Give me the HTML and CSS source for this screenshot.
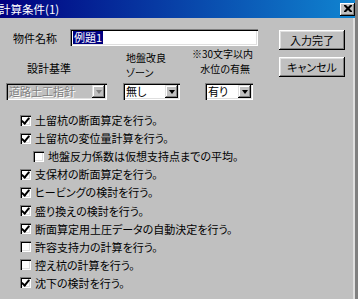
FILE: index.html
```html
<!DOCTYPE html>
<html lang="ja">
<head>
<meta charset="utf-8">
<title>計算条件(1)</title>
<link rel="stylesheet" href="styles.css">
</head>
<body>
<div class="window">
  <div class="titlebar">
    <span class="title">計算条件(1)</span>
    <span class="close"><svg width="8" height="7" viewBox="0 0 8 7"><path d="M0 0h2l2 2 2-2h2v1l-2.5 2.5L8 6v1H6L4 5 2 7H0V6l2.5-2.5L0 1z" fill="#000"/></svg></span>
  </div>
  <div class="client">
    <div class="top">
      <div class="form">
        <div class="name-row">
          <span class="name-label">物件名称</span>
          <div class="field"><span class="sel">例題1</span></div>
        </div>
        <div class="combos">
          <div class="lab lab1">設計基準</div>
          <div class="lab lab2">地盤改良<br>ゾーン</div>
          <div class="lab lab3"><span class="note">※30文字以内</span><span class="water">水位の有無</span></div>
          <div class="combo combo1 disabled"><span class="ctext">道路土工指針</span><span class="arrow"><i></i></span></div>
          <div class="combo combo2"><span class="ctext">無し</span><span class="arrow"><i></i></span></div>
          <div class="combo combo3"><span class="ctext">有り</span><span class="arrow"><i></i></span></div>
        </div>
      </div>
      <div class="buttons">
        <div class="btn">入力完了</div>
        <div class="btn">キャンセル</div>
      </div>
    </div>
    <ul class="checks">
      <li class="row"><span class="cb on"></span>土留杭の断面算定を行う。</li>
      <li class="row"><span class="cb on"></span>土留杭の変位量計算を行う。</li>
      <li class="row sub"><span class="cb"></span>地盤反力係数は仮想支持点までの平均。</li>
      <li class="row"><span class="cb on"></span>支保材の断面算定を行う。</li>
      <li class="row"><span class="cb on"></span>ヒービングの検討を行う。</li>
      <li class="row"><span class="cb on"></span>盛り換えの検討を行う。</li>
      <li class="row"><span class="cb on"></span>断面算定用土圧データの自動決定を行う。</li>
      <li class="row"><span class="cb"></span>許容支持力の計算を行う。</li>
      <li class="row"><span class="cb"></span>控え杭の計算を行う。</li>
      <li class="row"><span class="cb on"></span>沈下の検討を行う。</li>
    </ul>
  </div>
</div>
</body>
</html>
```

FILE: styles.css
```css
* { box-sizing: border-box; }
html, body { margin: 0; padding: 0; background: #c0c0c0; }
body {
  font-family: "Noto Sans CJK JP", "Noto Sans", sans-serif;
  font-size: 11px;
  font-feature-settings: "palt" 1;
  color: #000;
  width: 358px;
  height: 299px;
  overflow: hidden;
}
.window {
  width: 358px;
  height: 299px;
  background: #c0c0c0;
  display: flex;
  flex-direction: column;
  border-right: 3px solid #808080;
  box-shadow: inset -2px 0 0 #dfdfdf;
}
.titlebar {
  height: 18px;
  flex: none;
  background: linear-gradient(to right, #000080, #1084d0);
  display: flex;
  align-items: center;
  justify-content: space-between;
}
.title {
  color: #fff;
  font-size: 11.5px;
  line-height: 18px;
  margin-left: -1px;
}
.close {
  width: 15px;
  height: 13px;
  background: #c0c0c0;
  box-shadow: inset -1px -1px 0 #000, inset 1px 1px 0 #fff, inset -2px -2px 0 #808080;
  display: flex;
  align-items: center;
  justify-content: center;
  padding-bottom: 1px;
}
.client { flex: 1; display: flex; flex-direction: column; }
.top { display: flex; }
.form { width: 262px; }
.name-row {
  display: flex;
  align-items: center;
  margin-top: 11px;
  height: 17px;
}
.name-label { width: 70px; padding-left: 13px; }
.field {
  width: 188px;
  height: 17px;
  background: #fff;
  box-shadow: inset 1px 1px 0 #808080, inset 2px 2px 0 #000, inset -1px -1px 0 #fff, inset -2px -2px 0 #dfdfdf;
  padding: 2px 0 0 3px;
  line-height: 13px;
}
.sel { background: #000080; color: #fff; padding: 0 1px; display: inline-block; height: 13px; }
.combos {
  display: grid;
  grid-template-columns: 117px 82px 48px;
  grid-template-rows: 36px 17px;
  margin-top: 1px;
  padding-left: 6px;
}
.lab { align-self: start; white-space: nowrap; }
.lab1 { margin-top: 14px; padding-left: 21px; line-height: 14px; }
.lab2 { margin-top: 4px; padding-left: 3px; font-size: 10px; line-height: 14.5px; }
.lab3 { margin-left: -9px; display: flex; flex-direction: column; align-items: flex-end; font-size: 10px; line-height: 14.5px; }
.water { padding-right: 3px; }
.combo {
  height: 17px;
  background: #fff;
  box-shadow: inset 1px 1px 0 #808080, inset 2px 2px 0 #000, inset -1px -1px 0 #fff, inset -2px -2px 0 #dfdfdf;
  display: flex;
  align-items: center;
  padding: 2px 2px 2px 3px;
}
.combo1 { width: 101px; }
.combo2 { width: 57px; }
.combo3 { width: 48px; }
.ctext { flex: 1; line-height: 13px; }
.arrow {
  width: 13px;
  height: 13px;
  background: #c0c0c0;
  box-shadow: inset -1px -1px 0 #000, inset 1px 1px 0 #dfdfdf, inset -2px -2px 0 #808080, inset 2px 2px 0 #fff;
  display: flex;
  align-items: center;
  justify-content: center;
}
.arrow i {
  width: 0; height: 0;
  border-left: 3.5px solid transparent;
  border-right: 3.5px solid transparent;
  border-top: 4px solid #000;
}
.disabled { background: #c0c0c0; }
.disabled .ctext { color: #808080; text-shadow: 1px 1px 0 #fff; }
.disabled .arrow i { border-top-color: #808080; }
.buttons {
  margin-left: 17px;
  margin-top: 12px;
  display: flex;
  flex-direction: column;
  gap: 7px;
}
.btn {
  width: 66px;
  height: 20px;
  background: #c0c0c0;
  box-shadow: inset -1px -1px 0 #000, inset 1px 1px 0 #fff, inset -2px -2px 0 #808080, inset 2px 2px 0 #dfdfdf;
  display: flex;
  align-items: center;
  justify-content: center;
  line-height: 12px;
}
.checks {
  list-style: none;
  margin: 11px 0 0;
  padding: 0;
}
.row {
  height: 18.1px;
  display: flex;
  align-items: center;
  padding-left: 20px;
  gap: 4px;
  line-height: 12px;
  white-space: nowrap;
}
.row.sub { padding-left: 33px; }
.cb {
  width: 11px;
  height: 11px;
  flex: none;
  background: #fff;
  box-shadow: inset 1px 1px 0 #808080, inset 2px 2px 0 #000, inset -1px -1px 0 #fff, inset -2px -2px 0 #dfdfdf;
  position: relative;
}
.cb.on::after {
  content: "";
  position: absolute;
  left: 3px;
  top: 1px;
  width: 3px;
  height: 6px;
  border-right: 2px solid #000;
  border-bottom: 2px solid #000;
  transform: rotate(40deg);
}
```
